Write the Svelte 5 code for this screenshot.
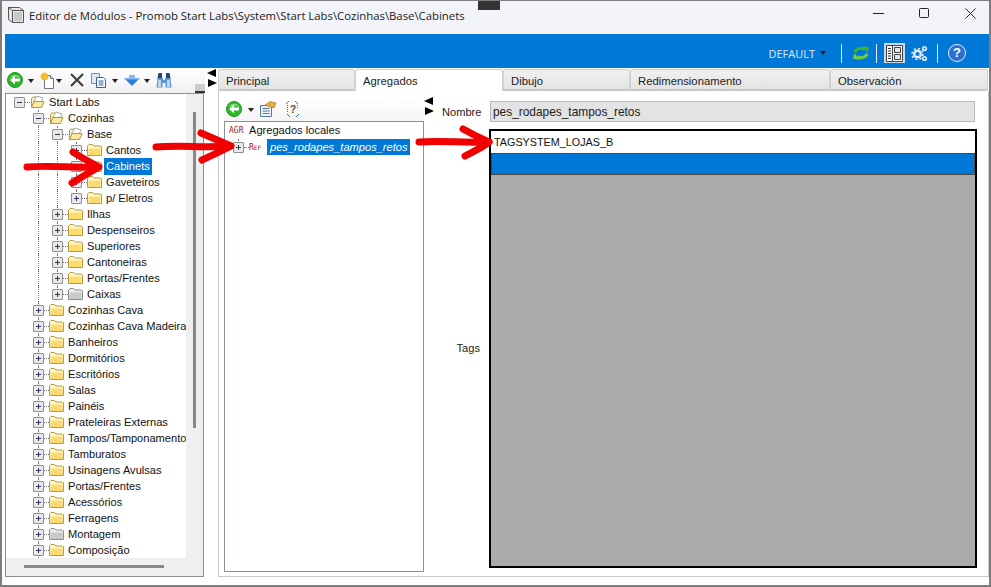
<script>
	const tree = [
		{ t: 'Start Labs', d: 0, open: true },
		{ t: 'Cozinhas', d: 1, open: true },
		{ t: 'Base', d: 2, open: true },
		{ t: 'Cantos', d: 3 },
		{ t: 'Cabinets', d: 3, sel: true },
		{ t: 'Gaveteiros', d: 3 },
		{ t: 'p/ Eletros', d: 3, last: true },
		{ t: 'Ilhas', d: 2 },
		{ t: 'Despenseiros', d: 2 },
		{ t: 'Superiores', d: 2 },
		{ t: 'Cantoneiras', d: 2 },
		{ t: 'Portas/Frentes', d: 2 },
		{ t: 'Caixas', d: 2, gray: true, last: true },
		{ t: 'Cozinhas Cava', d: 1 },
		{ t: 'Cozinhas Cava Madeira', d: 1 },
		{ t: 'Banheiros', d: 1 },
		{ t: 'Dormitórios', d: 1 },
		{ t: 'Escritórios', d: 1 },
		{ t: 'Salas', d: 1 },
		{ t: 'Painéis', d: 1 },
		{ t: 'Prateleiras Externas', d: 1 },
		{ t: 'Tampos/Tamponamento', d: 1 },
		{ t: 'Tamburatos', d: 1 },
		{ t: 'Usinagens Avulsas', d: 1 },
		{ t: 'Portas/Frentes', d: 1 },
		{ t: 'Acessórios', d: 1 },
		{ t: 'Ferragens', d: 1 },
		{ t: 'Montagem', d: 1, gray: true },
		{ t: 'Composição', d: 1 }
	];
	const tabs = [
		{ t: 'Principal', w: 137 },
		{ t: 'Agregados', w: 148, on: true },
		{ t: 'Dibujo', w: 127 },
		{ t: 'Redimensionamento', w: 200 },
		{ t: 'Observación', w: 158 }
	];
</script>

{#snippet folder(open, gray)}
	<svg class="folder" width="15" height="14" viewBox="0 0 15 14">
		{#if open}
			<path d="M1.500 12.500V3.500L3 2h3l1 1.500h3" fill="#fdf3c4" stroke={gray ? '#888' : '#b8953c'} />
			<path d="M3.500 6.500L7 1l6 2-1.500 3.500z" fill="#fff" stroke="#a8a8a0" />
			<path d="M1.500 12.500L4 6.500h10l-2.500 6z" fill="#fce9a0" stroke="#b8953c" stroke-linejoin="round" />
		{:else}
			<path d="M.500 12.500V3L2 1.500h3.500L7 3h6.500l1 1v8.500z" fill={gray ? '#ececec' : '#fff6cf'} stroke={gray ? '#8c8c8c' : '#bd9a3e'} stroke-linejoin="round" />
			<path d="M1.500 5.500h12v6.500h-12z" fill={gray ? '#c8c8c8' : '#fbdb6e'} />
		{/if}
	</svg>
{/snippet}

{#snippet back()}
	<svg class="back" width="16" height="16" viewBox="0 0 16 16">
		<circle cx="8" cy="8" r="7.500" fill="#2fb52b" stroke="#1f9a1f" />
		<path d="M2.500 6a6 5 0 0 1 11 0C10 4 6 4 2.500 6z" fill="#a8ea9c" opacity=".8" />
		<path d="M3 8l5-4.500V6.500h5v3H8v3z" fill="#fff" />
	</svg>
{/snippet}

{#snippet arrows()}
	<svg width="11" height="19" viewBox="0 0 11 19">
		<path d="M9 0v8L0 4zM1 10v8l9-4z" fill="#000" />
	</svg>
{/snippet}

<div class="window">
	<header class="title">
		<svg width="16" height="16" viewBox="0 0 16 16">
			<path d="M.500.500h11l4 3v12h-11l-4-3z" fill="#e8e8e8" stroke="#555" />
			<path d="M.500.500l4 3h11M4.500 3.500v12" fill="none" stroke="#555" />
			<path d="M6 5h8v9H6z" fill="#c8c8c8" />
		</svg>
		<span class="caption">Editor de Módulos - Promob Start Labs\System\Start Labs\Cozinhas\Base\Cabinets</span>
		<div class="grip"></div>
		<div class="winbtns">
			<svg width="11" height="11" viewBox="0 0 11 11"><path d="M0 5.500h11" stroke="#222" /></svg>
			<svg width="11" height="11" viewBox="0 0 11 11"><rect x=".5" y=".5" width="9" height="9" rx="1" fill="none" stroke="#222" /></svg>
			<svg width="11" height="11" viewBox="0 0 11 11"><path d="M.500.500l10 10M10.500.500l-10 10" stroke="#222" /></svg>
		</div>
	</header>

	<div class="body">
		<div class="bluebar">
			<span class="profile">DEFAULT</span>
			<span class="caret white"></span>
			<i class="sep"></i>
			<svg class="refresh" width="18" height="18" viewBox="0 0 18 18">
				<path d="M3 8.500C4 4.500 9 3 12.500 5.500" fill="none" stroke="#3ab52c" stroke-width="3" />
				<path d="M10.500 2L17 3.500 15.500 9z" fill="#3ab52c" />
				<path d="M15 9.500c-1 4-6 5.500-9.500 3" fill="none" stroke="#6fd03c" stroke-width="3" />
				<path d="M7.500 16L1 14.500 2.500 9z" fill="#6fd03c" />
			</svg>
			<i class="sep"></i>
			<span class="activebtn">
				<svg width="17" height="17" viewBox="0 0 17 17">
					<path d="M.500.500h16v16H.500z" fill="#f4f6f8" stroke="#444" />
					<path d="M6.500 1v15" stroke="#444" fill="none" />
					<path d="M2 3.500h3M2 6h3M2 8.500h3M2 11h3M2 13.500h3" stroke="#333" stroke-width="1.200" fill="none" />
					<path d="M8.500 2.500h6v5h-6zM8.500 9.500h6v5h-6z" fill="#dfe6ee" stroke="#444" />
				</svg>
			</span>
			<svg class="gears" width="17" height="17" viewBox="0 0 17 17">
				<circle cx="6.500" cy="9" r="3.300" fill="none" stroke="#e0ecf8" stroke-width="2.400" />
				<circle cx="6.500" cy="9" r="5.500" fill="none" stroke="#e0ecf8" stroke-width="1.600" stroke-dasharray="2 2.300" />
				<circle cx="13.500" cy="3.500" r="1.800" fill="none" stroke="#e0ecf8" stroke-width="1.600" />
				<circle cx="13.500" cy="13.500" r="1.800" fill="none" stroke="#e0ecf8" stroke-width="1.600" />
			</svg>
			<i class="sep"></i>
			<span class="help">?</span>
		</div>

		<div class="main">
			<aside class="left">
				<div class="toolbar">
					{@render back()}
					<span class="caret c1"></span>
					<svg class="ic1" width="16" height="17" viewBox="0 0 16 17">
						<path d="M4.500 3.500h6l3 3v10h-9z" fill="#fff" stroke="#66778c" />
						<path d="M10.500 3.500v3h3" fill="#dfe6ee" stroke="#66778c" />
						<circle cx="4.500" cy="4.500" r="3.500" fill="#f7bf2a" stroke="#f09a18" stroke-dasharray="1.500 1" />
					</svg>
					<span class="caret c2"></span>
					<svg class="ic2" width="14" height="14" viewBox="0 0 14 14">
						<path d="M1 1l12 12M13 1L1 13" stroke="#3a3a3a" stroke-width="2" />
					</svg>
					<svg class="ic3" width="16" height="15" viewBox="0 0 16 15">
						<path d="M.500.500h8v10h-8z" fill="#dfe9f6" stroke="#6f8fc0" />
						<path d="M5.500 4.500h7l2 2v8h-9z" fill="#fff" stroke="#3b62a0" />
						<path d="M7.500 8h5M7.500 10h5M7.500 12h5" stroke="#3b62a0" />
					</svg>
					<span class="caret c3"></span>
					<svg class="ic4" width="16" height="11" viewBox="0 0 16 11">
						<path d="M5 0h6v3h5l-8 8-8-8h5z" fill="#2f7cd8" />
						<path d="M0 3h5V0h6v3h5l-1.500 1.500h-13z" fill="#86b6ec" />
					</svg>
					<span class="caret c4"></span>
					<svg class="ic5" width="16" height="15" viewBox="0 0 16 15">
						<path d="M2.500 0h3.500v5h4V0h3.500l1 5H1.500z" fill="#24476f" />
						<path d="M1.500 5H7v2h2V5h5.500l1 9.500H9.500V10h-3v4.500H.500z" fill="#5f94d2" />
						<path d="M2 7h3v7H2zM11 7h3v7h-3z" fill="#bcd6f2" />
					</svg>
					<span class="overflow"></span>
				</div>
				<div class="treebox">
					<div class="treeinner">
						<div class="tree">
							{#each tree as n}
								<div class="row">
									{#each Array(n.d) as _, i}
										<span class="cell" class:line={i > 0}></span>
									{/each}
									<span class="cell" class:line={n.d > 0} class:half={n.last}>
										<span class="box">
											<span class="minus"></span>
											{#if !n.open}<span class="plus"></span>{/if}
										</span>
									</span>
									<span class="dash"></span>
									{@render folder(n.open, n.gray)}
									<span class="label" class:sel={n.sel}>{n.t}</span>
								</div>
							{/each}
						</div>
						<div class="vscroll"><span></span></div>
					</div>
					<div class="hscroll"><span></span></div>
				</div>
			</aside>

			<div class="split">{@render arrows()}</div>

			<section class="editor">
				<nav class="tabs">
					{#each tabs as tab}
						<span class="tab" class:on={tab.on} style="width:{tab.w}px">{tab.t}</span>
					{/each}
				</nav>
				<div class="panel">
					<div class="refcol">
						<div class="reftools">
							{@render back()}
							<span class="caret c5"></span>
							<svg class="ic6" width="17" height="16" viewBox="0 0 17 16">
								<path d="M.500 4.500h11v11H.500z" fill="#eef3f8" stroke="#5a7a9a" />
								<path d="M2.500 7.500h7M2.500 10h7M2.500 12.500h7" stroke="#5a7a9a" />
								<path d="M5 4l5-3.500 6 1.500-2 5-4-1z" fill="#e0b040" stroke="#a07818" stroke-width=".6" />
							</svg>
							<svg class="ic7" width="15" height="18" viewBox="0 0 15 18">
								<path d="M1 4l3-3M10 1l3 3M2 14l3 3M11 17l3-3" stroke="#2a6fd0" fill="none" />
								<path d="M2.500 5v8M12.500 5v3" stroke="#2a6fd0" stroke-dasharray="1 1" fill="none" />
								<text x="5" y="13" font-size="10" font-weight="700" fill="#6a4a10" font-family="Liberation Sans">?</text>
							</svg>
						</div>
						<div class="reftree">
							<div class="refrow one"><span class="tag">AGR</span><span>Agregados locales</span></div>
							<div class="refrow two">
								<span class="cell line half"><span class="box"><span class="minus"></span><span class="plus"></span></span></span>
								<span class="dash"></span>
								<span class="tag ref">Ref</span>
								<span class="refsel">pes_rodapes_tampos_retos</span>
							</div>
						</div>
					</div>
					<div class="split2">{@render arrows()}</div>
					<div class="fields">
						<div class="namerow">
							<span class="flabel">Nombre</span>
							<div class="input">pes_rodapes_tampos_retos</div>
						</div>
						<div class="tagrow">
							<span class="flabel tagsl">Tags</span>
							<div class="grid">
								<div class="cellrow">TAGSYSTEM_LOJAS_B</div>
								<div class="cellrow current"></div>
							</div>
						</div>
					</div>
				</div>
			</section>
		</div>
	</div>

	<svg class="marks" width="991" height="587" viewBox="0 0 991 587">
		<g fill="none" stroke="#f00000" stroke-linecap="round" stroke-linejoin="round" stroke-width="7">
			<path d="M27 167C50 165 75 168 98 167" />
			<path d="M73 152C80 157 90 162 99 167C90 172 80 178 72 183" />
			<path d="M156 147C180 145 205 148 230 146" />
			<path d="M201 133C210 137 222 142 231 146C222 151 210 156 202 160" />
			<path d="M419 142C440 140 465 143 489 142" />
			<path d="M463 129C470 133 480 138 489 142C482 148 472 152 465 156" />
		</g>
	</svg>
</div>

<style>
	:global(body) {
		margin: 0;
		background: #fff;
	}
	.window {
		position: relative;
		width: 991px;
		height: 587px;
		box-sizing: border-box;
		border: 1px solid #7e7e7e;
		border-width: 1px 2px 2px 2px;
		background: #fff;
		font-family: "Liberation Sans", Arial, sans-serif;
		font-size: 11.1px;
		color: #111;
		display: flex;
		flex-direction: column;
		overflow: hidden;
	}
	.title {
		height: 28px;
		padding: 0 0 5px 6px;
		flex: none;
		display: flex;
		align-items: center;
		background: #f3f4f9;
		position: relative;
	}
	.caption {
		margin-left: 5px;
		font-family: "Open Sans", sans-serif;
		font-size: 11.35px;
		color: #222;
	}
	.grip {
		position: absolute;
		left: 476px;
		top: 0;
		width: 22px;
		height: 9px;
		background: #333;
	}
	.winbtns {
		display: flex;
		gap: 35px;
		padding-right: 13px;
		position: absolute;
		right: 0;
		top: 7px;
	}
	.body {
		flex: 1;
		min-height: 0;
		display: flex;
		flex-direction: column;
		padding: 0 0 8px 3px;
	}
	.bluebar {
		height: 34px;
		flex: none;
		background: #0078d7;
		display: flex;
		align-items: center;
		justify-content: flex-end;
		padding-right: 23px;
	}
	.profile {
		color: #dceafa;
		font-family: "Open Sans", sans-serif;
		font-size: 11px;
		margin-right: 5px;
		margin-top: 4px;
	}
	.caret {
		width: 0;
		height: 0;
		border: 3px solid transparent;
		border-top: 4px solid #222;
		border-bottom: 0;
		display: inline-block;
		flex: none;
	}
	.caret.white {
		margin-right: 15px;
		margin-top: 4px;
	}
	.sep {
		width: 1px;
		height: 19px;
		background: #e3eefa;
		margin-top: 4px;
	}
	.refresh {
		margin: 4px 6px 0 10px;
	}
	.activebtn {
		margin: 4px 6px 0 7px;
		width: 21px;
		height: 20px;
		background: #c9d9ea;
		display: flex;
		align-items: center;
		justify-content: center;
	}
	.gears {
		margin: 4px 9px 0 0;
	}
	.help {
		margin: 4px 0 0 10px;
		width: 16px;
		height: 16px;
		border-radius: 50%;
		background: #2b6fd0;
		border: 1px solid #e4effa;
		color: #fff;
		font-weight: 700;
		font-size: 13px;
		line-height: 16px;
		text-align: center;
	}
	.main {
		flex: 1;
		min-height: 0;
		display: flex;
	}
	.left {
		width: 200px;
		flex: none;
		display: flex;
		flex-direction: column;
	}
	.toolbar {
		height: 25px;
		flex: none;
		display: flex;
		align-items: center;
		padding: 0 0 1px 2px;
		box-sizing: border-box;
		background: linear-gradient(#ffffff, #f0f0f0);
		position: relative;
		border-radius: 0 0 4px 0;
	}
	.toolbar .caret,
	.reftools .caret {
		margin-top: 2px;
	}
	.c1 { margin-left: 5px; margin-right: 6px; }
	.c2 { margin-right: 8px; }
	.ic2 { margin-right: 7px; }
	.c3 { margin-left: 5px; margin-right: 6px; }
	.c4 { margin-left: 4px; margin-right: 6px; }
	.c5 { margin-left: 6px; margin-right: 6px; }
	.overflow {
		position: absolute;
		right: 0;
		bottom: 0;
		width: 10px;
		height: 9px;
		background: #ccc;
		border-bottom: 2px solid #333;
		box-sizing: border-box;
	}
	.treebox {
		flex: 1;
		min-height: 0;
		border: 1px solid #8a8f9c;
		background: #efefef;
		display: flex;
		flex-direction: column;
		margin-right: 1px;
	}
	.treeinner {
		flex: 1;
		min-height: 0;
		display: flex;
	}
	.tree {
		flex: 1;
		min-width: 0;
		background: #fff;
		overflow: hidden;
		padding: 0 0 0 3px;
	}
	.row {
		height: 16px;
		display: flex;
		align-items: center;
		white-space: nowrap;
	}
	.cell {
		width: 19px;
		height: 16px;
		flex: none;
		position: relative;
		display: block;
	}
	.line::before {
		content: "";
		position: absolute;
		left: 10px;
		top: 0;
		bottom: 0;
		border-left: 1px dotted #777;
	}
	.line.half::before {
		bottom: 8px;
	}
	.box {
		position: absolute;
		left: 5px;
		top: 3px;
		width: 9px;
		height: 9px;
		border: 1px solid #8f8f8f;
		border-radius: 1px;
		background: #e9e9e9;
	}
	.minus {
		position: absolute;
		left: 2px;
		right: 2px;
		top: 4px;
		height: 1px;
		background: #2b3a55;
	}
	.plus {
		position: absolute;
		top: 2px;
		bottom: 2px;
		left: 4px;
		width: 1px;
		background: #2b3a55;
	}
	.dash {
		width: 6px;
		margin-left: -4px;
		border-top: 1px dotted #777;
		flex: none;
	}
	.folder {
		flex: none;
	}
	.label {
		margin-left: 2px;
		padding: 0 2px;
		line-height: 17px;
	}
	.label.sel {
		background: #0078d7;
		color: #fff;
	}
	.vscroll {
		width: 17px;
		flex: none;
		position: relative;
	}
	.vscroll span {
		position: absolute;
		left: 7px;
		top: 18px;
		width: 3px;
		height: 316px;
		background: #888;
	}
	.hscroll {
		height: 18px;
		flex: none;
		position: relative;
	}
	.hscroll span {
		position: absolute;
		left: 18px;
		top: 7px;
		width: 140px;
		height: 3px;
		background: #888;
	}
	.split {
		width: 13px;
		flex: none;
		padding-top: 1px;
		padding-left: 2px;
		box-sizing: border-box;
	}
	.editor {
		flex: 1;
		min-width: 0;
		display: flex;
		flex-direction: column;
	}
	.tabs {
		height: 22px;
		flex: none;
		display: flex;
		margin-top: 1px;
	}
	.tab {
		box-sizing: border-box;
		background: linear-gradient(#f0f0f0, #e4e4e4);
		border: 1px solid #d0d0d0;
		border-bottom: 2px solid #c8c8c8;
		border-radius: 3px 3px 0 0;
		padding: 5px 0 0 7px;
		font-size: 11.3px;
		color: #222;
	}
	.tab.on {
		background: #fff;
		border-bottom: 0;
	}
	.panel {
		flex: 1;
		min-height: 0;
		display: flex;
		border: 1px solid #c8c8c8;
		border-top: 0;
		padding: 6px 11px 4px 5px;
	}
	.refcol {
		width: 200px;
		flex: none;
		display: flex;
		flex-direction: column;
	}
	.reftools {
		height: 24px;
		flex: none;
		display: flex;
		align-items: center;
		padding-left: 2px;
		background: linear-gradient(#fff, #f5f5f5);
	}
	.ic7 {
		margin-left: 8px;
	}
	.reftree {
		flex: 1;
		border: 1px solid #8a8f9c;
	}
	.refrow {
		height: 16px;
		display: flex;
		align-items: center;
		padding-left: 4px;
		white-space: nowrap;
	}
	.refrow.one {
		margin-bottom: 1px;
	}
	.refrow.two {
		padding-left: 0;
		margin-left: 3px;
	}
	.tag {
		font-family: "DejaVu Sans Mono", monospace;
		font-size: 8px;
		color: #a01818;
		width: 16px;
		margin-right: 4px;
	}
	.tag.ref {
		margin: 0 4px 0 0;
		width: 14px;
		font-variant: small-caps;
	}
	.refsel {
		background: #0078d7;
		color: #fff;
		font-style: italic;
		padding: 0 2px 0 3px;
		line-height: 16px;
	}
	.split2 {
		width: 12px;
		flex: none;
	}
	.fields {
		flex: 1;
		min-width: 0;
		display: flex;
		flex-direction: column;
		gap: 7px;
		margin: 4px 0;
	}
	.namerow {
		display: flex;
		align-items: center;
		padding-left: 6px;
	}
	.flabel {
		width: 48px;
		flex: none;
		color: #222;
	}
	.input {
		flex: 1;
		height: 21px;
		margin-right: 2px;
		box-sizing: border-box;
		background: #e3e3e3;
		border: 1px solid #b8b8b8;
		padding: 3px 2px;
		font-size: 11.9px;
		color: #222;
	}
	.tagrow {
		flex: 1;
		min-height: 0;
		display: flex;
		align-items: center;
	}
	.tagsl {
		width: 44px;
		text-align: right;
		padding: 0 9px 2px 0;
	}
	.grid {
		flex: 1;
		align-self: stretch;
		background: #ababab;
		border: 2px solid #000;
		min-width: 0;
	}
	.cellrow {
		height: 22px;
		background: #fff;
		line-height: 22px;
		padding-left: 3px;
		font-size: 10.8px;
	}
	.cellrow.current {
		background: #0078d7;
		outline: 1px dotted #333;
		outline-offset: -1px;
	}
	.marks {
		position: absolute;
		left: -2px;
		top: -1px;
		pointer-events: none;
	}
</style>
